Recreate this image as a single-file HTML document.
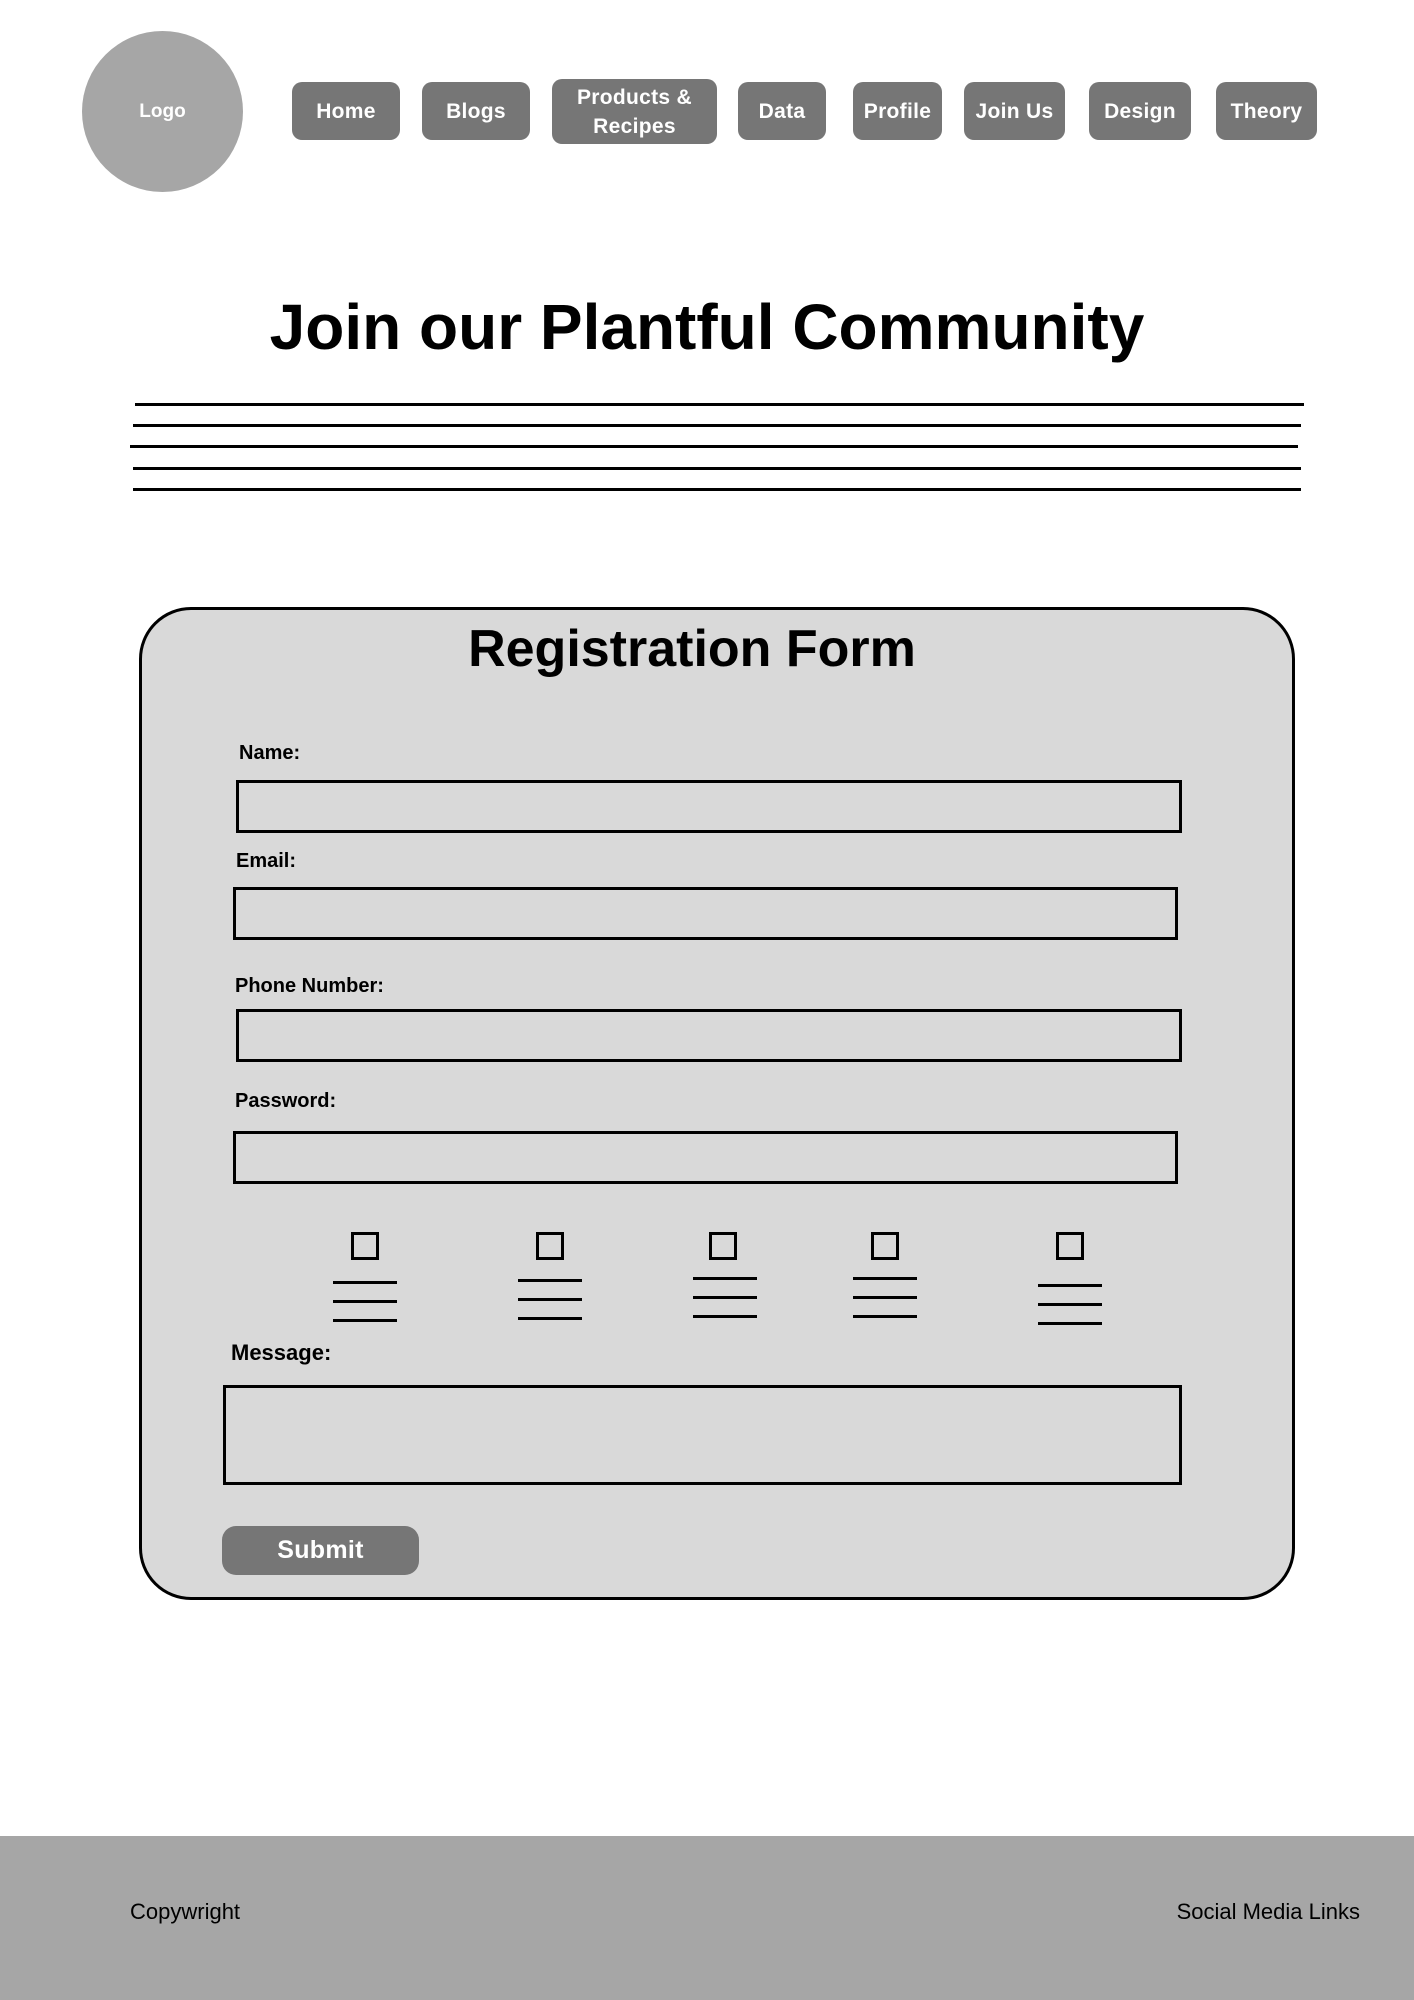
<!DOCTYPE html>
<html><head><meta charset="utf-8"><style>
*{margin:0;padding:0;box-sizing:border-box}
body{width:1414px;height:2000px;position:relative;background:#fff;font-family:"Liberation Sans",sans-serif;overflow:hidden}
.a{position:absolute}
.logo{left:82px;top:31px;width:161px;height:161px;border-radius:50%;background:#a6a6a6;color:#fff;font-weight:bold;font-size:19px;display:flex;align-items:center;justify-content:center}
.nav{background:#767676;color:#fff;font-weight:900;font-size:21px;border-radius:10px;display:flex;align-items:center;justify-content:center;text-align:center;line-height:29px;letter-spacing:0.3px}
.hl{background:#000;height:3px}
.box{left:139px;top:607px;width:1156px;height:993px;border:3px solid #000;border-radius:52px;background:#d9d9d9}
.lbl{font-weight:bold;font-size:20px;color:#000}
.inp{border:3px solid #000}
.cb{width:28px;height:28px;border:3px solid #000}
.ln{height:3px;width:64px;background:#000}
</style></head><body>
<div class="a logo">Logo</div>
<div class="a nav" style="left:292px;top:82px;width:108px;height:58px">Home</div>
<div class="a nav" style="left:422px;top:82px;width:108px;height:58px">Blogs</div>
<div class="a nav" style="left:552px;top:79px;width:165px;height:65px">Products &amp;<br>Recipes</div>
<div class="a nav" style="left:738px;top:82px;width:88px;height:58px">Data</div>
<div class="a nav" style="left:853px;top:82px;width:89px;height:58px">Profile</div>
<div class="a nav" style="left:964px;top:82px;width:101px;height:58px">Join Us</div>
<div class="a nav" style="left:1089px;top:82px;width:102px;height:58px">Design</div>
<div class="a nav" style="left:1216px;top:82px;width:101px;height:58px">Theory</div>

<div class="a" style="left:0;width:1414px;top:287px;text-align:center;font-weight:bold;font-size:64px;line-height:80px">Join our Plantful Community</div>

<div class="a hl" style="left:135px;width:1169px;top:403px"></div>
<div class="a hl" style="left:133px;width:1168px;top:424px"></div>
<div class="a hl" style="left:130px;width:1168px;top:445px"></div>
<div class="a hl" style="left:133px;width:1168px;top:467px"></div>
<div class="a hl" style="left:133px;width:1168px;top:488px"></div>

<div class="a box"></div>
<div class="a" style="left:139px;width:1106px;top:618px;text-align:center;font-weight:bold;font-size:52px;line-height:62px">Registration Form</div>

<div class="a lbl" style="left:239px;top:742px">Name:</div>
<div class="a inp" style="left:236px;top:780px;width:946px;height:53px"></div>
<div class="a lbl" style="left:236px;top:850px">Email:</div>
<div class="a inp" style="left:233px;top:887px;width:945px;height:53px"></div>
<div class="a lbl" style="left:235px;top:975px">Phone Number:</div>
<div class="a inp" style="left:236px;top:1009px;width:946px;height:53px"></div>
<div class="a lbl" style="left:235px;top:1090px">Password:</div>
<div class="a inp" style="left:233px;top:1131px;width:945px;height:53px"></div>

<div class="a cb" style="left:351px;top:1232px"></div>
<div class="a cb" style="left:536px;top:1232px"></div>
<div class="a cb" style="left:709px;top:1232px"></div>
<div class="a cb" style="left:871px;top:1232px"></div>
<div class="a cb" style="left:1056px;top:1232px"></div>

<div class="a ln" style="left:333px;top:1281px"></div><div class="a ln" style="left:333px;top:1300px"></div><div class="a ln" style="left:333px;top:1319px"></div>
<div class="a ln" style="left:518px;top:1279px"></div><div class="a ln" style="left:518px;top:1298px"></div><div class="a ln" style="left:518px;top:1317px"></div>
<div class="a ln" style="left:693px;top:1277px"></div><div class="a ln" style="left:693px;top:1296px"></div><div class="a ln" style="left:693px;top:1315px"></div>
<div class="a ln" style="left:853px;top:1277px"></div><div class="a ln" style="left:853px;top:1296px"></div><div class="a ln" style="left:853px;top:1315px"></div>
<div class="a ln" style="left:1038px;top:1284px"></div><div class="a ln" style="left:1038px;top:1303px"></div><div class="a ln" style="left:1038px;top:1322px"></div>

<div class="a lbl" style="left:231px;top:1340px;font-size:22px">Message:</div>
<div class="a inp" style="left:223px;top:1385px;width:959px;height:100px"></div>

<div class="a nav" style="left:222px;top:1526px;width:197px;height:49px;border-radius:14px;font-size:25px">Submit</div>

<div class="a" style="left:0;top:1836px;width:1414px;height:164px;background:#a6a6a6"></div>
<div class="a" style="left:130px;top:1899px;font-size:22px">Copywright</div>
<div class="a" style="right:54px;top:1899px;font-size:22px">Social Media Links</div>
</body></html>
